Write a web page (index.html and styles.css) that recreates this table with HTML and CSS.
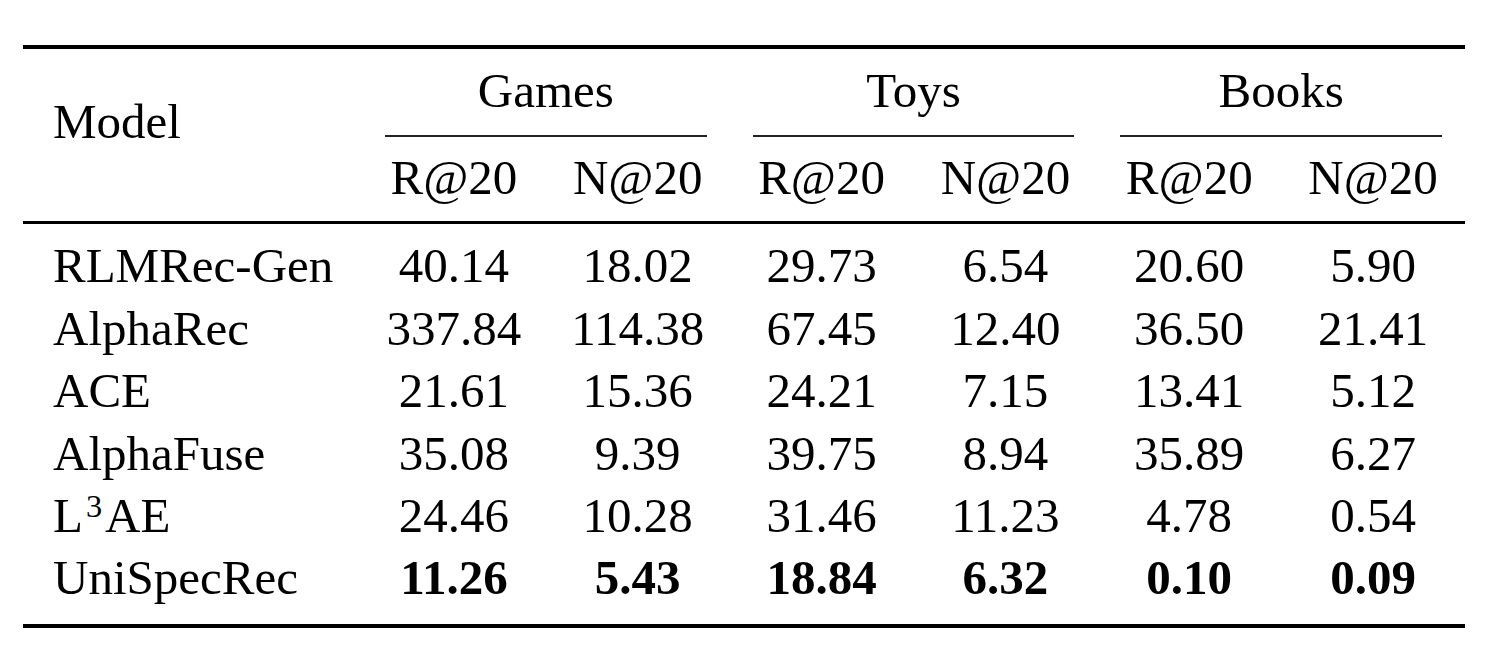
FILE: index.html
```html
<!DOCTYPE html>
<html>
<head>
<meta charset="utf-8">
<link rel="stylesheet" href="styles.css">
</head>
<body>
<div class="tbl">
  <div class="rule top"></div>
  <div class="head">
    <div class="model">Model</div>
    <div class="grp">Games</div>
    <div class="grp">Toys</div>
    <div class="grp">Books</div>
    <div class="cmid"></div>
    <div class="cmid"></div>
    <div class="cmid"></div>
    <div class="sub">R@20</div>
    <div class="sub">N@20</div>
    <div class="sub">R@20</div>
    <div class="sub">N@20</div>
    <div class="sub">R@20</div>
    <div class="sub">N@20</div>
  </div>
  <div class="rule mid"></div>
  <div class="body">
    <div class="name">RLMRec-Gen</div><div class="num">40.14</div><div class="num">18.02</div><div class="num">29.73</div><div class="num">6.54</div><div class="num">20.60</div><div class="num">5.90</div>
    <div class="name">AlphaRec</div><div class="num">337.84</div><div class="num">114.38</div><div class="num">67.45</div><div class="num">12.40</div><div class="num">36.50</div><div class="num">21.41</div>
    <div class="name">ACE</div><div class="num">21.61</div><div class="num">15.36</div><div class="num">24.21</div><div class="num">7.15</div><div class="num">13.41</div><div class="num">5.12</div>
    <div class="name">AlphaFuse</div><div class="num">35.08</div><div class="num">9.39</div><div class="num">39.75</div><div class="num">8.94</div><div class="num">35.89</div><div class="num">6.27</div>
    <div class="name">L<sup class="sup">3</sup>AE</div><div class="num">24.46</div><div class="num">10.28</div><div class="num">31.46</div><div class="num">11.23</div><div class="num">4.78</div><div class="num">0.54</div>
    <div class="name">UniSpecRec</div><div class="num best">11.26</div><div class="num best">5.43</div><div class="num best">18.84</div><div class="num best">6.32</div><div class="num best">0.10</div><div class="num best">0.09</div>
  </div>
  <div class="rule bottom"></div>
</div>
</body>
</html>
```

FILE: styles.css
```css
html, body {
  margin: 0;
  padding: 0;
  background: #ffffff;
}

body {
  font-family: "Liberation Serif", "Times New Roman", serif;
  font-size: 49px;
  color: #000000;
}

.tbl {
  width: 1442px;
  margin-left: 23px;
  padding-top: 45px;
}

.rule {
  background: #000000;
}

.rule.top {
  height: 4px;
}

.rule.mid {
  height: 3px;
}

.rule.bottom {
  height: 4px;
}

.head,
.body {
  display: grid;
  grid-template-columns: 339px repeat(6, 1fr);
}

.model {
  grid-column: 1;
  grid-row: 1 / 4;
  padding-left: 30px;
  padding-top: 42.3px;
  line-height: 62.4px;
}

.grp {
  grid-column: span 2;
  text-align: center;
  line-height: 62.4px;
  padding-top: 11.3px;
  padding-bottom: 12.3px;
}

.cmid {
  grid-column: span 2;
  height: 2px;
  margin: 0 23px;
  background: #222222;
}

.sub {
  text-align: center;
  line-height: 62.4px;
  padding-top: 10.3px;
  padding-bottom: 11.3px;
}

.body {
  padding-top: 11.3px;
  padding-bottom: 14.3px;
}

.body > div {
  line-height: 62.4px;
  white-space: nowrap;
}

.name {
  padding-left: 30px;
}

.num {
  text-align: center;
}

.best {
  font-weight: bold;
}

.sup {
  font-size: 0.66em;
  line-height: 0;
  vertical-align: 0.46em;
  margin-left: 3px;
  margin-right: 3px;
}
```
